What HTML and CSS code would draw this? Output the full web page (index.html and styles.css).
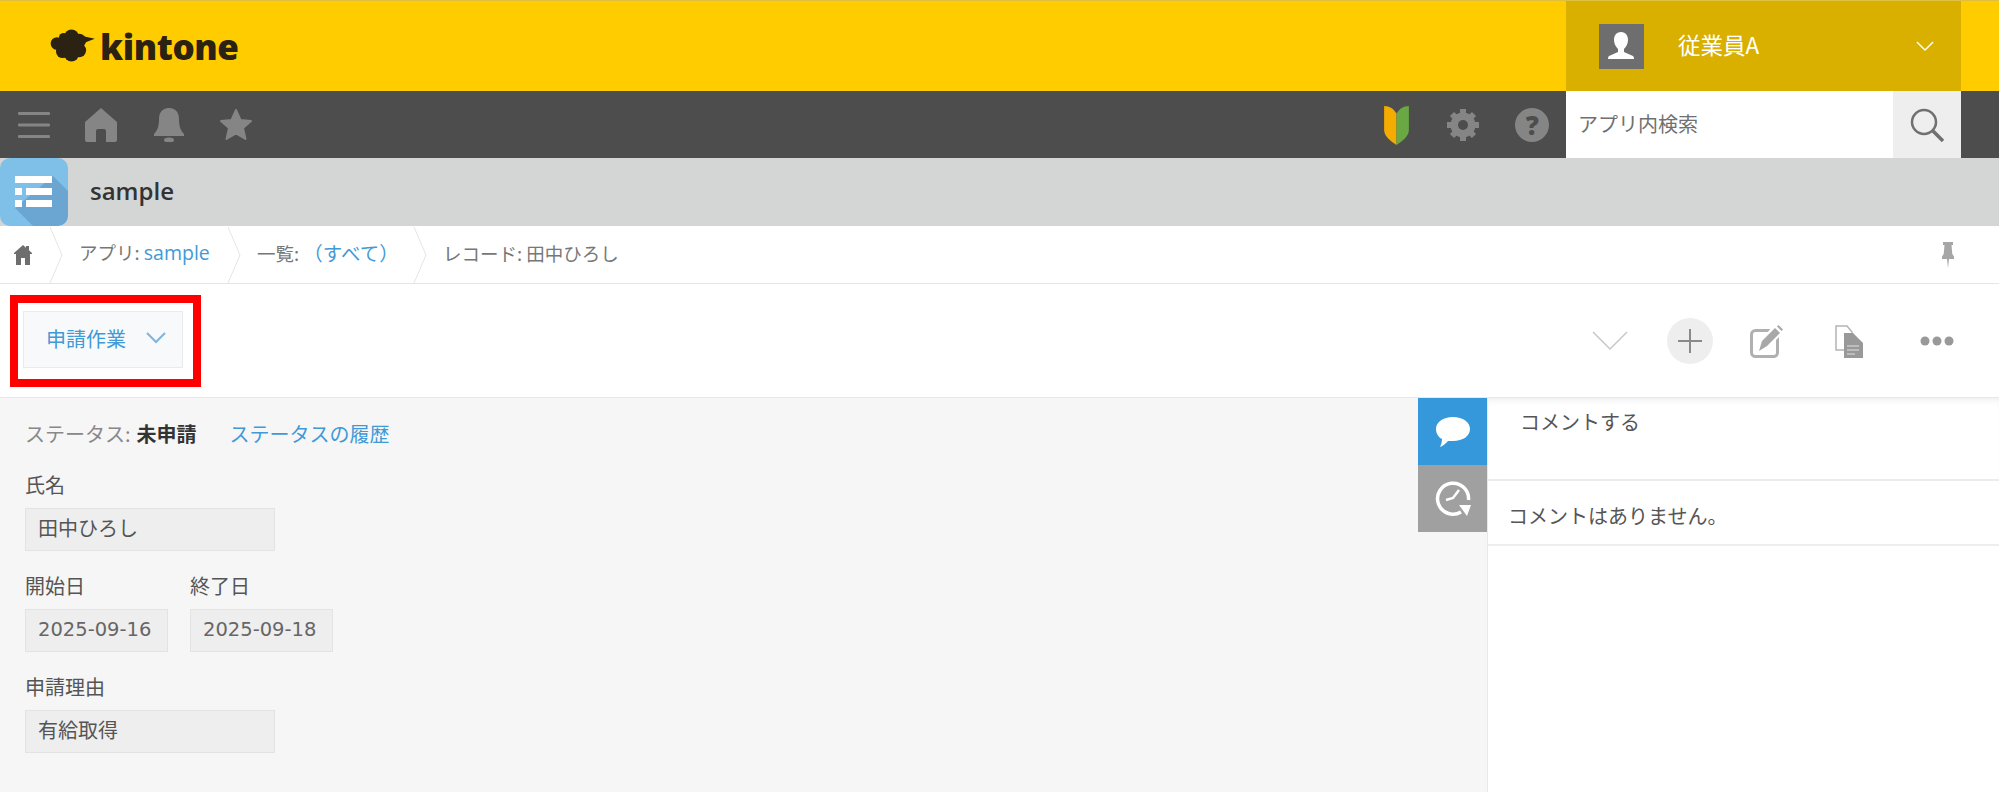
FILE: index.html
```html
<!DOCTYPE html>
<html lang="ja">
<head>
    <meta charset="UTF-8">
    <title>sample - kintone</title>
    <link rel="stylesheet" href="styles.css">
</head>
<body>
    <header class="top-bar">
        <div class="logo">
            <svg class="logo-cloud" viewBox="0 0 46 34">
                <path d="M32 7 L46 10 L36 14 Z" fill="#2b2213"/>
                <g fill="#2b2213">
                    <circle cx="7" cy="15" r="6.500"/>
                    <circle cx="14" cy="9" r="5"/>
                    <circle cx="22" cy="8" r="7.500"/>
                    <circle cx="30" cy="12" r="7"/>
                    <circle cx="30" cy="22" r="7"/>
                    <circle cx="22" cy="26" r="7.500"/>
                    <circle cx="13" cy="23" r="7"/>
                    <circle cx="19" cy="16" r="10"/>
                </g>
            </svg>
            <span class="logo-text">kintone</span>
        </div>
        <div class="user-menu">
            <span class="avatar">
                <svg viewBox="0 0 44 44" width="44" height="44">
                    <path d="M22 8c-5 0-7 4-7 8 0 4 2 7 4 9v3l-9 4c-1 .6-1 3-1 3h26s0-2.400-1-3l-9-4v-3c2-2 4-5 4-9 0-4-2-8-7-8z" fill="#fff"/>
                </svg>
            </span>
            <span class="user-name">従業員A</span>
            <svg class="user-arrow" viewBox="0 0 20 12" width="18" height="11">
                <path d="M1 1l9 9 9-9" fill="none" stroke="#fff" stroke-width="1.500"/>
            </svg>
        </div>
    </header>

    <nav class="nav-bar">
        <div class="nav-group">
            <span class="nav-icon">
                <svg viewBox="0 0 32 26" width="32" height="26" fill="#858585">
                    <rect y="0" width="32" height="3" rx="1"/>
                    <rect y="11.500" width="32" height="3" rx="1"/>
                    <rect y="23" width="32" height="3" rx="1"/>
                </svg>
            </span>
            <span class="nav-icon">
                <svg viewBox="0 0 32 34" width="32" height="34" fill="#858585">
                    <path d="M16 0L32 14V32a2 2 0 0 1-2 2H21V23a2 2 0 0 0-2-2h-6a2 2 0 0 0-2 2V34H2a2 2 0 0 1-2-2V14z"/>
                </svg>
            </span>
            <span class="nav-icon">
                <svg viewBox="0 0 30 34" width="30" height="34" fill="#858585">
                    <path d="M15 0c7 0 10 5 10 11 0 8 2 12 5 15v2H0v-2c3-3 5-7 5-15C5 5 8 0 15 0z"/>
                    <ellipse cx="15" cy="32" rx="5" ry="2.500"/>
                </svg>
            </span>
            <span class="nav-icon">
                <svg viewBox="0 0 34 33" width="34" height="33" fill="#858585" stroke="#858585" stroke-width="2" stroke-linejoin="round">
                    <path d="M17 2l4.500 10 10.500 1-8 7 2.500 11L17 25.500 7.500 31 10 20l-8-7 10.500-1z"/>
                </svg>
            </span>
        </div>
        <div class="nav-group nav-right">
            <span class="nav-icon beginner-icon">
                <svg viewBox="0 0 28 42" width="27" height="40">
                    <path d="M1 1c6 0 10 3 13 8v33C8 38 1 33 1 26z" fill="#f5ac00"/>
                    <path d="M27 1c-6 0-10 3-13 8v33c6-4 13-9 13-16z" fill="#6aa843"/>
                </svg>
            </span>
            <span class="nav-icon gear-icon">
                <svg viewBox="0 0 34 34" width="34" height="34">
                    <circle cx="17" cy="17" r="9" fill="none" stroke="#858585" stroke-width="7"/>
                    <path d="M17 17V1M17 17V33M17 17H1M17 17H33M17 17L6 6M17 17L28 28M17 17L28 6M17 17L6 28" stroke="#858585" stroke-width="6"/>
                    <circle cx="17" cy="17" r="5" fill="#4d4d4d"/>
                </svg>
            </span>
            <span class="nav-icon">
                <span class="help-icon">?</span>
            </span>
        </div>
        <div class="search-box">
            <span class="search-text">アプリ内検索</span>
            <span class="search-button">
                <svg viewBox="0 0 34 34" width="34" height="34">
                    <circle cx="14" cy="14" r="12" fill="none" stroke="#707070" stroke-width="2.500"/>
                    <path d="M23 23l10 10" stroke="#707070" stroke-width="3.500"/>
                </svg>
            </span>
        </div>
    </nav>

    <div class="app-bar">
        <span class="app-icon">
            <svg viewBox="0 0 68 68" width="68" height="68">
                <path d="M15 50L53 18 68 33V58a10 10 0 0 1-10 10H33z" fill="#6ba6d2"/>
                <g fill="#fff">
                    <rect x="15" y="18" width="37" height="7"/>
                    <rect x="15" y="30" width="7" height="7"/>
                    <rect x="26" y="30" width="26" height="7"/>
                    <rect x="15" y="42" width="7" height="7"/>
                    <rect x="26" y="42" width="26" height="7"/>
                </g>
            </svg>
        </span>
        <span class="app-name">sample</span>
    </div>

    <div class="breadcrumb">
        <span class="crumb-home">
            <svg viewBox="0 0 18 20" width="18" height="20" fill="#6e6e6e">
                <path d="M9 0l3 2.700V1h3v4.300L18 8v1h-2v11h-5v-7H7v7H2V9H0V8z"/>
            </svg>
        </span>
        <svg class="crumb-sep" viewBox="0 0 14 56" width="14" height="56">
            <path d="M1 0l12 28L1 56" fill="none" stroke="#e3e5e6"/>
        </svg>
        <span class="crumb crumb-app">アプリ: <a class="link">sample</a></span>
        <svg class="crumb-sep" viewBox="0 0 14 56" width="14" height="56">
            <path d="M1 0l12 28L1 56" fill="none" stroke="#e3e5e6"/>
        </svg>
        <span class="crumb crumb-list">一覧: <a class="link">（すべて）</a></span>
        <svg class="crumb-sep" viewBox="0 0 14 56" width="14" height="56">
            <path d="M1 0l12 28L1 56" fill="none" stroke="#e3e5e6"/>
        </svg>
        <span class="crumb">レコード: 田中ひろし</span>
        <svg class="pin" viewBox="0 0 12 26" width="12" height="26" fill="#a6a6a6">
            <path d="M1 0h10v3H9.500l.8 9 1.700 2.500V17H7l-1 9-1-9H0v-2.500L1.700 12l.8-9H1z"/>
        </svg>
    </div>

    <div class="tool-bar">
        <div class="highlight-box">
            <button class="action-button">
                <span>申請作業</span>
                <svg viewBox="0 0 20 12" width="20" height="12">
                    <path d="M1 1l9 9 9-9" fill="none" stroke="#7fb5dc" stroke-width="2"/>
                </svg>
            </button>
        </div>
        <div class="tool-icons">
            <span class="tool-icon">
                <svg viewBox="0 0 36 20" width="36" height="20">
                    <path d="M1 1l17 17L35 1" fill="none" stroke="#c8c8c8" stroke-width="1.500"/>
                </svg>
            </span>
            <span class="tool-icon tool-plus">
                <svg viewBox="0 0 24 24" width="24" height="24">
                    <path d="M12 0v24M0 12h24" stroke="#8a8a8a" stroke-width="2"/>
                </svg>
            </span>
            <span class="tool-icon tool-edit">
                <svg viewBox="0 0 33 33" width="33" height="33">
                    <rect x="1.500" y="5.500" width="26" height="26" rx="4" fill="none" stroke="#b0b0b0" stroke-width="3"/>
                    <path d="M22 2L12 14 8 27l12-6L32 9z" fill="#fff"/>
                    <path d="M9 26l3-10L25 3l5 5-13 13z" fill="#a8a8a8"/>
                    <path d="M27 1.500l1.500-1.500 4.500 4.500-1.500 1.500z" fill="#a8a8a8"/>
                </svg>
            </span>
            <span class="tool-icon tool-copy">
                <svg viewBox="0 0 28 33" width="28" height="33">
                    <path d="M1 1h11l5 6v18H1z" fill="#fff" stroke="#b4b4b4" stroke-width="1.500"/>
                    <path d="M9 8h9l10 10v15H9z" fill="#999999"/>
                    <path d="M12 21h12M12 25h12M12 29h8" stroke="#bdbdbd" stroke-width="2"/>
                </svg>
            </span>
            <span class="tool-icon tool-more">
                <svg viewBox="0 0 34 10" width="34" height="10" fill="#999999">
                    <circle cx="5" cy="5" r="4.500"/>
                    <circle cx="17" cy="5" r="4.500"/>
                    <circle cx="29" cy="5" r="4.500"/>
                </svg>
            </span>
        </div>
    </div>

    <main class="content">
        <section class="record">
            <div class="status-row">
                <span class="status-label">ステータス:</span>
                <strong class="status-value">未申請</strong>
                <a class="link status-link">ステータスの履歴</a>
            </div>
            <div class="field-row">
                <div class="field">
                    <div class="field-label">氏名</div>
                    <div class="field-value wide">田中ひろし</div>
                </div>
            </div>
            <div class="field-row">
                <div class="field">
                    <div class="field-label">開始日</div>
                    <div class="field-value date">2025-09-16</div>
                </div>
                <div class="field">
                    <div class="field-label">終了日</div>
                    <div class="field-value date">2025-09-18</div>
                </div>
            </div>
            <div class="field-row">
                <div class="field">
                    <div class="field-label">申請理由</div>
                    <div class="field-value wide">有給取得</div>
                </div>
            </div>
        </section>

        <div class="side-tabs">
            <span class="side-tab tab-comment">
                <svg viewBox="0 0 36 32" width="36" height="32">
                    <path d="M18 1c10 0 17 5 17 12s-7 12-17 12c-2 0-4 0-5 0-2 2-5 5-8 6 1-2 2-5 2-8C3 21 1 17 1 13 1 6 8 1 18 1z" fill="#fff"/>
                </svg>
            </span>
            <span class="side-tab tab-history">
                <svg viewBox="0 0 36 38" width="36" height="38" fill="none" stroke="#fff">
                    <path d="M26 32A15.500 15.500 0 1 1 33.500 20" stroke-width="3.500"/>
                    <path d="M24 10l-6 8-7 2" stroke-width="2.500"/>
                    <path d="M24 25h12l-4 11z" fill="#fff" stroke="none"/>
                </svg>
            </span>
        </div>

        <aside class="comment-panel">
            <div class="comment-input">コメントする</div>
            <div class="comment-empty">コメントはありません。</div>
        </aside>
    </main>
</body>
</html>
```

FILE: styles.css
```css
* {
    margin: 0;
    padding: 0;
    box-sizing: border-box;
}

body {
    width: 1999px;
    height: 792px;
    overflow: hidden;
    background: #ffffff;
    color: #555555;
    font-family: "Noto Sans CJK JP", "Open Sans", sans-serif;
    font-size: 20px;
}

svg {
    display: block;
}

.link {
    color: #3f9ad6;
}

/* Top yellow bar */
.top-bar {
    display: flex;
    height: 91px;
    border-top: 1px solid #e0c040;
    background: #ffcc00;
}

.logo {
    display: flex;
    align-items: center;
    gap: 5px;
    padding-left: 50px;
}

.logo-cloud {
    width: 45px;
    height: 33px;
    margin-bottom: 2px;
}

.logo-text {
    color: #2b2213;
    font-family: "Open Sans", sans-serif;
    font-size: 35px;
    font-weight: 800;
    letter-spacing: -0.4px;
}

.user-menu {
    display: flex;
    align-items: center;
    width: 395px;
    margin-left: auto;
    margin-right: 38px;
    padding-left: 33px;
    background: #d9b000;
}

.avatar {
    width: 45px;
    height: 45px;
    background: #6e6e6e;
}

.user-name {
    margin-left: 34px;
    padding-bottom: 5px;
    color: #ffffff;
    font-size: 22.5px;
}

.user-arrow {
    margin-left: auto;
    margin-right: 27px;
}

/* Dark navigation bar */
.nav-bar {
    display: flex;
    height: 67px;
    background: #4d4d4d;
}

.nav-group {
    display: flex;
}

.nav-right {
    margin-left: auto;
}

.nav-icon {
    display: flex;
    align-items: center;
    justify-content: center;
    width: 67.5px;
}

.beginner-icon {
    padding-right: 2px;
}

.gear-icon {
    padding-right: 3px;
}

.help-icon {
    width: 34px;
    height: 34px;
    border-radius: 50%;
    background: #858585;
    color: #4d4d4d;
    font-family: "Open Sans", sans-serif;
    font-size: 26px;
    font-weight: 800;
    line-height: 34px;
    text-align: center;
}

.search-box {
    display: flex;
    width: 395px;
    margin-right: 38px;
    background: #ffffff;
}

.search-text {
    flex: 1;
    padding-left: 12px;
    color: #707070;
    line-height: 65px;
}

.search-button {
    display: flex;
    align-items: center;
    justify-content: center;
    width: 68px;
    background: #eeeeee;
}

/* App title */
.app-bar {
    display: flex;
    align-items: center;
    height: 68px;
    background: #d4d6d5;
}

.app-icon {
    width: 68px;
    height: 68px;
    overflow: hidden;
    border-radius: 10px;
    background: #7fc0e8;
}

.app-name {
    margin-left: 22px;
    padding-bottom: 4px;
    color: #333333;
    font-family: "Open Sans", sans-serif;
    font-size: 24px;
    font-weight: 600;
}

/* Breadcrumb */
.breadcrumb {
    display: flex;
    align-items: center;
    height: 58px;
    border-bottom: 1px solid #e3e5e6;
    font-size: 18.5px;
    color: #777777;
}

.crumb-home {
    width: 49px;
    padding-left: 14px;
}

.crumb {
    padding-left: 16px;
    padding-bottom: 4px;
}

.crumb-app {
    width: 164px;
}

.crumb-list {
    width: 172px;
}

.crumb a {
    font-family: "Open Sans", "Noto Sans CJK JP", sans-serif;
    font-size: 19.5px;
}

.pin {
    margin-left: auto;
    margin-right: 45px;
}

/* Action toolbar */
.tool-bar {
    display: flex;
    height: 113px;
    padding-top: 11px;
}

.highlight-box {
    width: 191px;
    height: 92px;
    margin-left: 10px;
    padding: 8px 10px 11px 5px;
    border: 8px solid #ff0000;
}

.action-button {
    display: flex;
    align-items: center;
    gap: 20px;
    width: 160px;
    height: 57px;
    padding-left: 22px;
    padding-bottom: 3px;
    border: 1px solid #e6ebee;
    background: #f7f9fa;
    color: #3f9ad6;
    font-family: inherit;
    font-size: 20px;
}

.tool-icons {
    display: flex;
    align-items: center;
    margin-left: auto;
    margin-right: 39px;
    padding-bottom: 10px;
}

.tool-icon {
    display: flex;
    align-items: center;
    justify-content: center;
    width: 46px;
    height: 46px;
}

.tool-plus {
    margin-left: 34px;
    border-radius: 50%;
    background: #eeeeee;
}

.tool-edit {
    margin-left: 30px;
}

.tool-copy {
    margin-left: 37px;
}

.tool-more {
    margin-left: 42px;
}

/* Record area */
.content {
    display: flex;
    height: 395px;
    background: #f6f6f6;
    border-top: 1px solid #e8e8e8;
}

.record {
    width: 1418px;
    padding: 20px 0 0 25px;
}

.status-row {
    display: flex;
    align-items: center;
    height: 30px;
    margin-bottom: 25px;
}

.status-label {
    color: #888888;
}

.status-value {
    margin-left: 6px;
    color: #333333;
    font-size: 20px;
    font-weight: 700;
}

.status-link {
    margin-left: 33px;
}

.field-row {
    display: flex;
    gap: 22px;
    margin-bottom: 23px;
}

.field-label {
    height: 26px;
    margin-bottom: 9px;
    line-height: 24px;
}

.field-value {
    height: 43px;
    padding-left: 12px;
    border: 1px solid #e3e3e3;
    background: #eeeeee;
    line-height: 37px;
}

.wide {
    width: 250px;
}

.date {
    width: 143px;
    color: #666666;
    font-family: "DejaVu Sans", sans-serif;
    font-size: 19.5px;
    line-height: 40px;
}

.side-tabs {
    width: 69px;
}

.side-tab {
    display: flex;
    align-items: center;
    justify-content: center;
    height: 67px;
}

.tab-comment {
    background: #3498db;
}

.tab-history {
    background: #a0a0a0;
}

/* Comments */
.comment-panel {
    flex: 1;
    border-left: 1px solid #e8e8e8;
    background: #ffffff;
}

.comment-input {
    height: 83px;
    padding: 9px 0 0 32px;
    border-bottom: 2px solid #ececec;
    line-height: 30px;
    box-shadow: inset 0 6px 8px -6px #e4e4e4;
}

.comment-empty {
    height: 65px;
    padding-left: 20px;
    border-bottom: 2px solid #eeeeee;
    line-height: 70px;
}
```
